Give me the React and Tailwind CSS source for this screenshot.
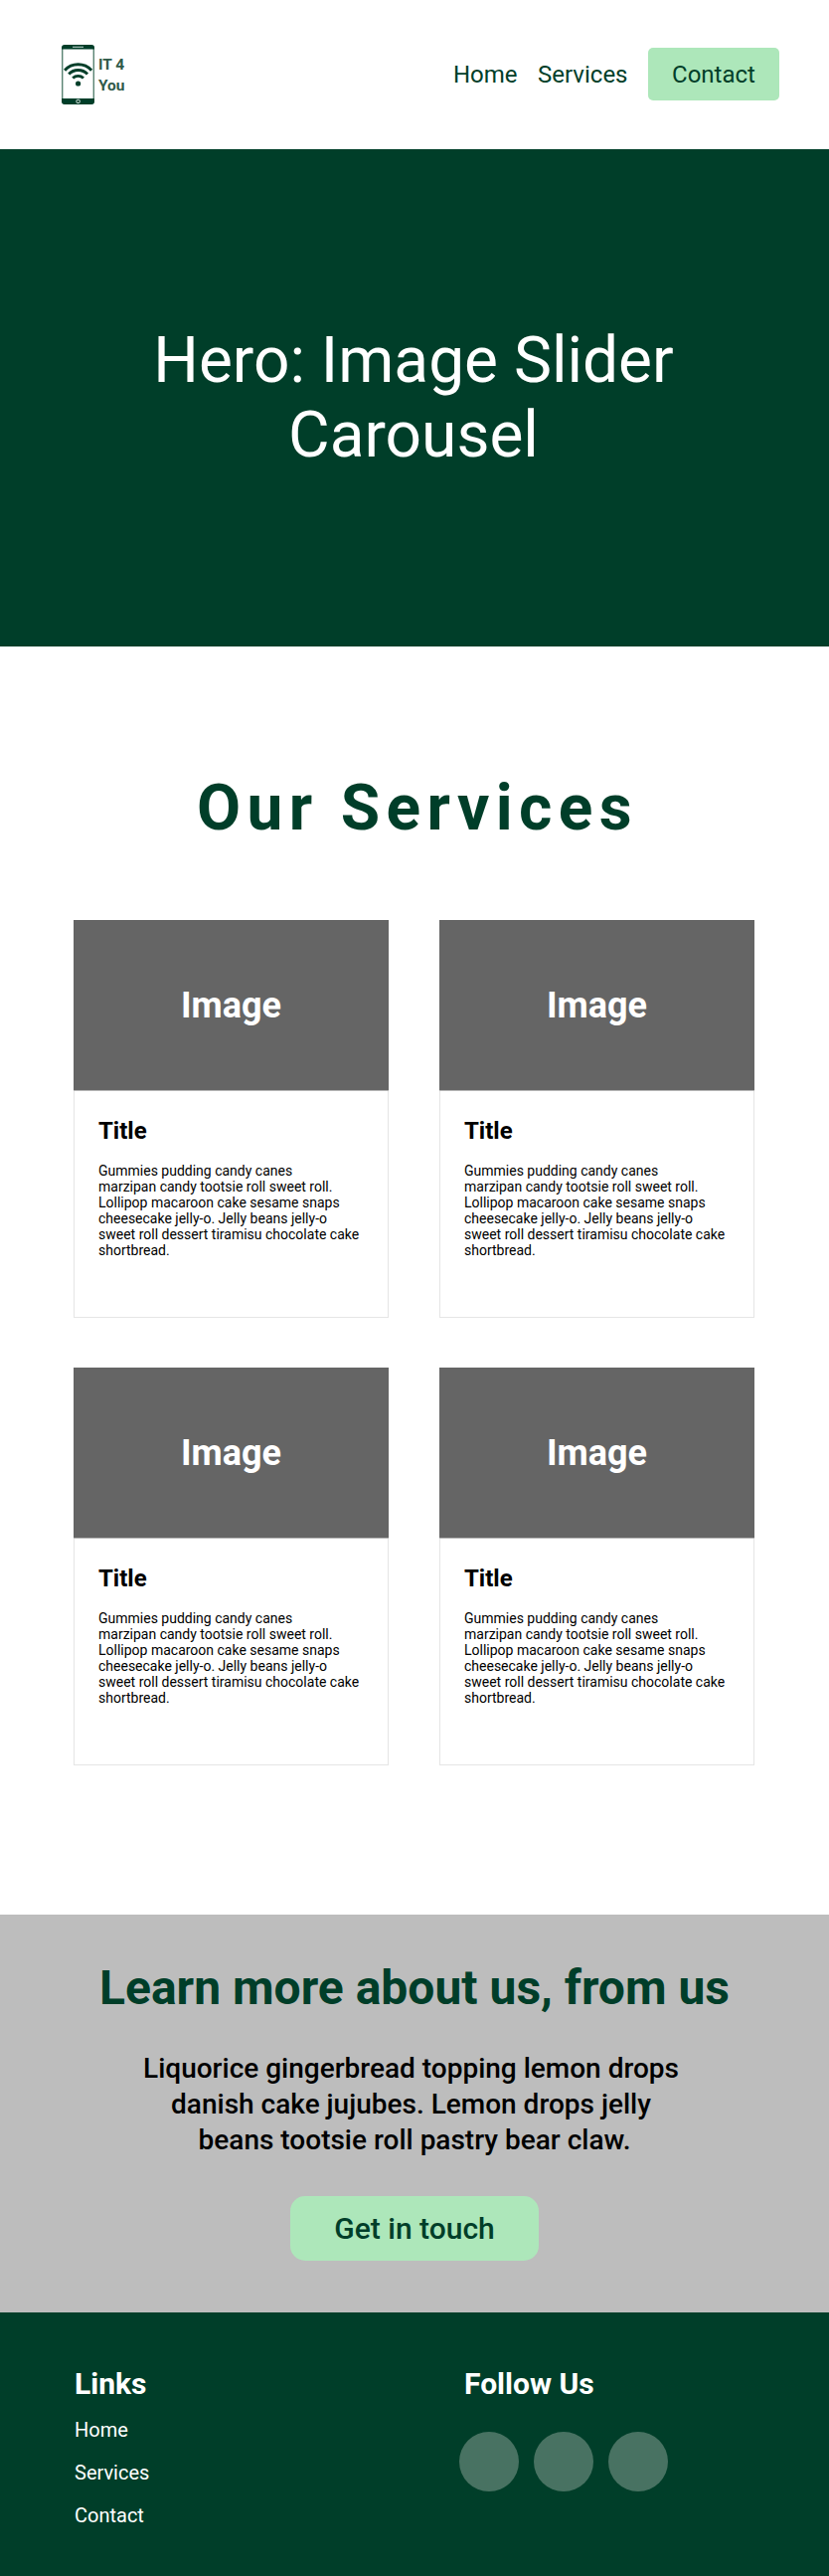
const services = [1, 2, 3, 4];

function Logo() {
  return (
    <div className="flex items-center">
      <svg width="33" height="60" viewBox="0 0 33 60" fill="none">
        <rect x="0.75" y="1" width="31.5" height="58" rx="2.5" fill="white" stroke="#3f6f5c" strokeWidth="1.2" />
        <path d="M3 0h27a3 3 0 0 1 3 3v1.500H0V3a3 3 0 0 1 3-3Z" fill="#003e29" />
        <path d="M0 54h33v3a3 3 0 0 1-3 3H3a3 3 0 0 1-3-3Z" fill="#003e29" />
        <path d="M11 2.300h11" stroke="#a9c0b7" strokeWidth="1.200" />
        <rect x="15" y="55.300" width="3.200" height="3.200" rx="0.600" stroke="#d5e2dc" strokeWidth="1" />
        <g stroke="#003e29" strokeWidth="2.900">
          <path d="M3.100 25.700a18.300 18.300 0 0 1 27 0" />
          <path d="M7.200 29.500a13 13 0 0 1 18.800 0" />
          <path d="M11.200 33.500a8 8 0 0 1 10.800 0" />
        </g>
        <circle cx="16.600" cy="39" r="2.600" fill="#003e29" />
      </svg>
      <div className="ml-1 pt-[2px] text-[15.5px] leading-[21px] font-bold text-[#305a49]">
        <p>IT 4</p>
        <p>You</p>
      </div>
    </div>
  );
}

function ServiceCard() {
  return (
    <article className="h-[400px] w-[317px] border border-[#e5e5e5]">
      <div className="-mx-px -mt-px flex h-[171px] items-center justify-center bg-[#656565] text-4xl leading-[42px] font-bold text-white">
        Image
      </div>
      <div className="-mx-px border-t border-[#b5b5b5] px-[25px] pt-[26px]">
        <h3 className="text-2xl leading-7 font-bold">Title</h3>
        <p className="mt-[18px] w-[266px] text-sm leading-4">
          Gummies pudding candy canes
          <br />
          marzipan candy tootsie roll sweet roll. Lollipop macaroon cake sesame snaps cheesecake jelly-o. Jelly beans
          jelly-o sweet roll dessert tiramisu chocolate cake shortbread.
        </p>
      </div>
    </article>
  );
}

export default function App() {
  return (
    <div className="w-[834px] bg-white font-['Roboto',sans-serif] text-black">
      <header className="flex h-[150px] items-center justify-between pr-[50px] pl-[62px]">
        <Logo />
        <nav className="flex items-center gap-[20.5px] pb-px text-2xl leading-7 text-[#003e29]">
          <a>Home</a>
          <a>Services</a>
          <a className="flex h-[53px] w-[132px] items-center justify-center rounded-[5px] bg-[#ade7ba]">Contact</a>
        </nav>
      </header>

      <section className="flex h-[500px] items-center justify-center bg-[#003e29] pr-[2px]">
        <h1 className="w-[600px] text-center text-[64px] leading-[75px] text-white">Hero: Image Slider Carousel</h1>
      </section>

      <section className="flex h-[1275px] flex-col pt-[125px]">
        <h2 className="pl-[6px] text-center text-[64px] leading-[75px] font-bold tracking-[0.1em] text-[#003e29]">
          Our Services
        </h2>
        <div className="mt-[75px] ml-[74px] grid w-[685px] grid-cols-2 gap-x-[51px] gap-y-[50px]">
          {services.map((id) => (
            <ServiceCard key={id} />
          ))}
        </div>
      </section>

      <section className="flex h-[400px] flex-col items-center bg-[#bdbdbd] pt-[46px] text-center">
        <h2 className="text-5xl leading-[56px] font-bold text-[#003e29]">Learn more about us, from us</h2>
        <p className="mt-[35px] text-[28px] leading-9 font-medium whitespace-pre">
          {"Liquorice gingerbread topping lemon drops \ndanish cake jujubes. Lemon drops jelly \nbeans tootsie roll pastry bear claw."}
        </p>
        <a className="mt-[38px] flex h-[65px] w-[250px] items-center justify-center rounded-[15px] bg-[#ade7ba] text-3xl leading-[35px] font-medium text-[#003e29]">
          Get in touch
        </a>
      </section>

      <footer className="flex h-[265px] bg-[#003e29] pt-[54px] text-white">
        <div className="w-[392px] pl-[75px]">
          <h3 className="text-3xl leading-[35px] font-bold">Links</h3>
          <ul className="mt-[18px] flex flex-col gap-5 text-xl leading-[23px]">
            <li>Home</li>
            <li>Services</li>
            <li>Contact</li>
          </ul>
        </div>
        <div className="pl-[70px]">
          <h3 className="pl-[5px] text-3xl leading-[35px] font-bold">Follow Us</h3>
          <div className="mt-[31px] flex gap-[15px]">
            <span className="size-[60px] rounded-full bg-[#487262]" />
            <span className="size-[60px] rounded-full bg-[#487262]" />
            <span className="size-[60px] rounded-full bg-[#487262]" />
          </div>
        </div>
      </footer>
    </div>
  );
}
